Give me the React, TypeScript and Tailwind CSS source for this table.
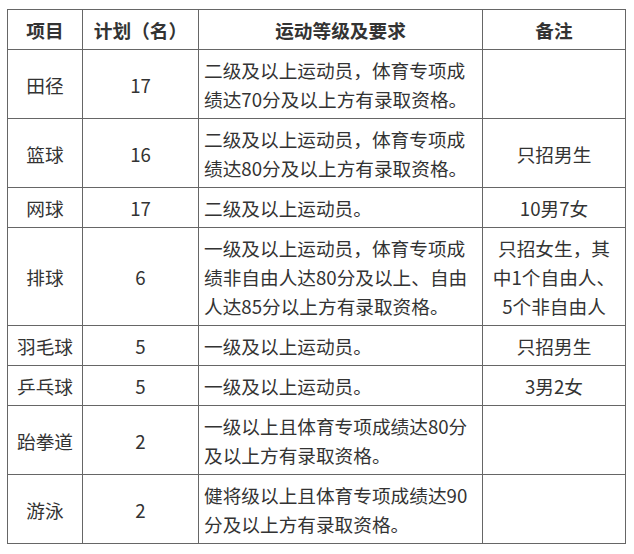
const rows: { name: string; count: string; req: string; note: string[] }[] = [
  { name: "田径", count: "17", req: "二级及以上运动员，体育专项成绩达70分及以上方有录取资格。", note: [] },
  { name: "篮球", count: "16", req: "二级及以上运动员，体育专项成绩达80分及以上方有录取资格。", note: ["只招男生"] },
  { name: "网球", count: "17", req: "二级及以上运动员。", note: ["10男7女"] },
  {
    name: "排球",
    count: "6",
    req: "一级及以上运动员，体育专项成绩非自由人达80分及以上、自由人达85分以上方有录取资格。",
    note: ["只招女生，其", "中1个自由人、", "5个非自由人"],
  },
  { name: "羽毛球", count: "5", req: "一级及以上运动员。", note: ["只招男生"] },
  { name: "乒乓球", count: "5", req: "一级及以上运动员。", note: ["3男2女"] },
  { name: "跆拳道", count: "2", req: "一级以上且体育专项成绩达80分及以上方有录取资格。", note: [] },
  { name: "游泳", count: "2", req: "健将级以上且体育专项成绩达90分及以上方有录取资格。", note: [] },
];

const cell = "border border-[#666] px-[5px] py-[5px] align-middle";

export default function App() {
  return (
    <div className="min-h-[554px] bg-white pl-[7px] pt-[9px] font-['Noto_Sans_CJK_SC','Noto_Sans',sans-serif] text-[18.67px] leading-[29px] text-[#333]">
      <table className="w-[618px] table-fixed border-collapse">
        <colgroup>
          <col className="w-[75px]" />
          <col className="w-[116px]" />
          <col className="w-[284px]" />
          <col className="w-[143px]" />
        </colgroup>
        <thead>
          <tr>
            <th className={`${cell} text-center font-bold`}>项目</th>
            <th className={`${cell} text-center font-bold`}>计划（名）</th>
            <th className={`${cell} text-center font-bold`}>运动等级及要求</th>
            <th className={`${cell} text-center font-bold`}>备注</th>
          </tr>
        </thead>
        <tbody>
          {rows.map((r) => (
            <tr key={r.name}>
              <td className={`${cell} text-center`}>{r.name}</td>
              <td className={`${cell} text-center`}>{r.count}</td>
              <td className={`${cell} text-left`}>{r.req}</td>
              <td className={`${cell} text-center`}>
                {r.note.map((line) => (
                  <div key={line} className="whitespace-nowrap">
                    {line}
                  </div>
                ))}
              </td>
            </tr>
          ))}
        </tbody>
      </table>
    </div>
  );
}
